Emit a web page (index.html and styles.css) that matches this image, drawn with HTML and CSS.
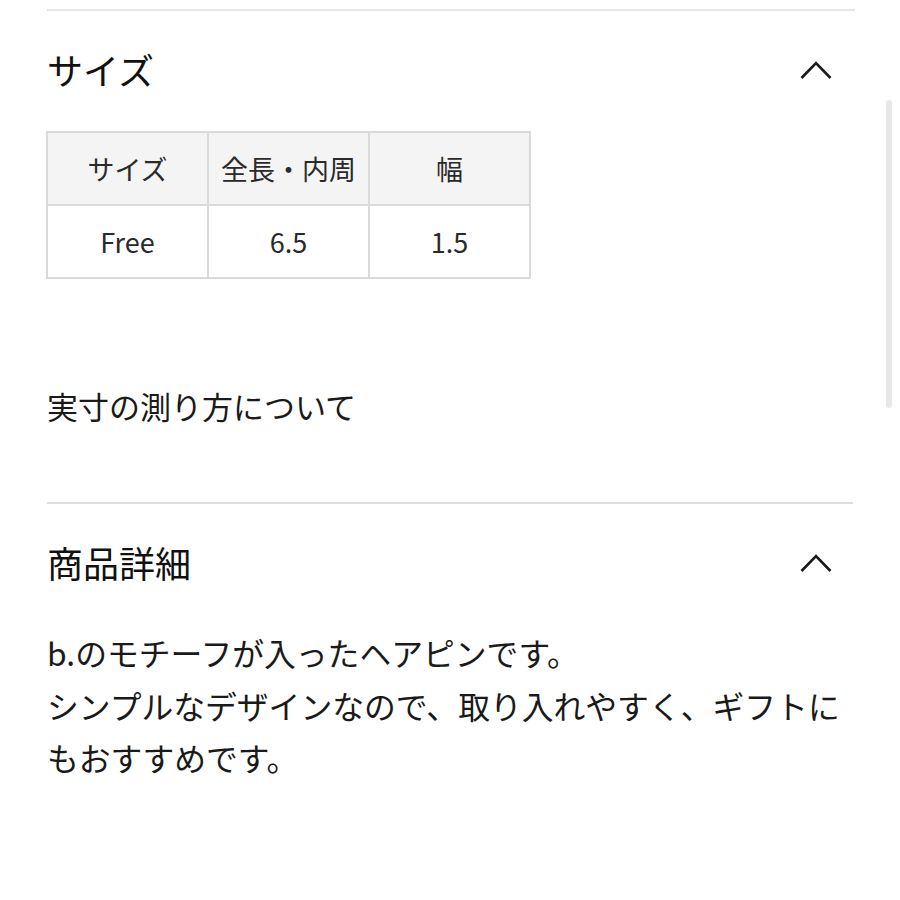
FILE: index.html
```html
<!DOCTYPE html>
<html lang="ja">

<head>
  <meta charset="UTF-8">
  <meta name="viewport" content="width=device-width, initial-scale=1.0">
  <title>サイズ・商品詳細</title>
  <link rel="stylesheet" href="styles.css">
</head>

<body>
  <div class="top-rule"></div>

  <section class="block block-size">
    <header class="block-head">
      <h2 class="block-title">サイズ</h2>
      <svg class="chevron" width="32" height="20" viewBox="0 0 32 20">
        <polyline points="1.5,18 16,3 30.5,18" fill="none" stroke="#1a1a1a" stroke-width="2.6" />
      </svg>
    </header>

    <table class="size-table">
      <tr>
        <th>サイズ</th>
        <th>全長・内周</th>
        <th>幅</th>
      </tr>
      <tr>
        <td>Free</td>
        <td>6.5</td>
        <td>1.5</td>
      </tr>
    </table>

    <p class="measure-link">実寸の測り方について</p>
  </section>

  <section class="block block-detail">
    <header class="block-head">
      <h2 class="block-title">商品詳細</h2>
      <svg class="chevron" width="32" height="20" viewBox="0 0 32 20">
        <polyline points="1.5,18 16,3 30.5,18" fill="none" stroke="#1a1a1a" stroke-width="2.6" />
      </svg>
    </header>

    <p class="detail-text">b.のモチーフが入ったヘアピンです。<br>シンプルなデザインなので、取り入れやすく、ギフトにもおすすめです。</p>
  </section>

  <div class="scrollbar"></div>
</body>

</html>
```

FILE: styles.css
```css
html {
  box-sizing: border-box;
  font-family: "Noto Sans CJK JP", "Noto Sans", sans-serif;
  background-color: #fff;
  color: #1a1a1a;
}

*,
*:before,
*::after {
  box-sizing: inherit;
}

body {
  margin: 0;
  position: relative;
  min-height: 900px;
}

.top-rule {
  height: 2px;
  margin: 9px 45px 0 47px;
  background-color: #e6e6e6;
}

.block {
  margin: 0 47px;
}

.block-head {
  display: flex;
  align-items: center;
  justify-content: space-between;
  height: 40px;
  padding-right: 21px;
}

.block-title {
  margin: 0;
  font-size: 36px;
  font-weight: 400;
  line-height: 40px;
  color: #111;
}

.chevron {
  display: block;
}

.block-size {
  padding-top: 38px;
  padding-bottom: 76px;
  border-bottom: 2px solid #dedede;
}

.block-size .chevron {
  margin-top: 2px;
}

.size-table {
  margin: 42px 0 0 -1px;
  border-collapse: collapse;
  font-size: 27px;
  color: #2a2a2a;
}

.size-table th,
.size-table td {
  width: 161px;
  height: 73px;
  padding: 0;
  border: 2px solid #dadada;
  text-align: center;
  font-weight: 400;
}

.size-table th {
  background-color: #f4f4f4;
}

.size-table td {
  background-color: #fff;
}

.measure-link {
  margin: 107px 0 0;
  font-size: 31px;
  line-height: 40px;
}

.block-detail {
  padding-top: 38px;
}

.block-detail .chevron {
  margin-top: 2px;
}

.detail-text {
  margin: 44px 0 0;
  font-size: 31.8px;
  line-height: 52.5px;
}

.scrollbar {
  position: absolute;
  top: 100px;
  left: 886px;
  width: 6px;
  height: 308px;
  border-radius: 3px;
  background-color: #e8e8e8;
}
```
